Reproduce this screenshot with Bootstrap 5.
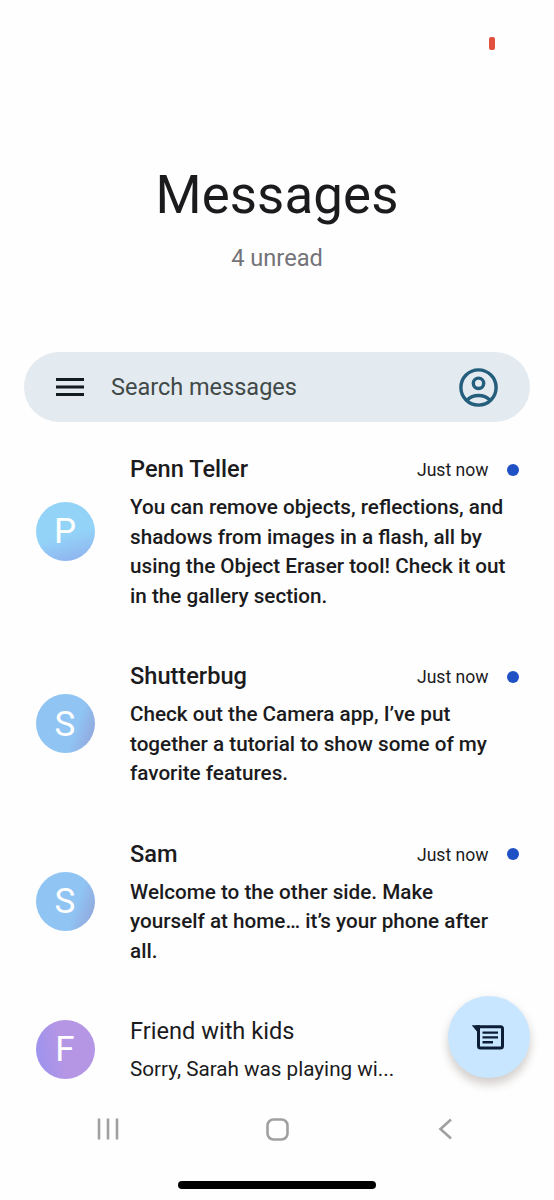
<!DOCTYPE html>
<html lang="en">
<head>
<meta charset="utf-8">
<meta name="viewport" content="width=device-width, initial-scale=1">
<title>Messages</title>
<link href="https://cdn.jsdelivr.net/npm/bootstrap@5.3.0/dist/css/bootstrap.min.css" rel="stylesheet">
<style>
body { font-family: Roboto, sans-serif; background: #fefefe; color: #1b1b1d; }
.phone { width: 554px; height: 1200px; }
.status { height: 84px; padding: 37px 59px 0 0; }
.rec { width: 6px; height: 13px; border-radius: 2px; background: #e2503f; }
.head { height: 268px; padding-top: 79px; }
.title { font-size: 52.8px; line-height: 64px; font-weight: 400; letter-spacing: .1px; }
.unread { font-size: 23.6px; line-height: 30px; margin-top: 16px; color: #737378; }
.search { height: 70px; margin: 0 24px; padding: 0 32px; background: #e3eaf0; color: #404947; font-size: 23.5px; }
.search-label { margin-left: 27px; padding-top: 1px; }
.threads { margin-top: 6px; }
.thread { padding: 26px 35px 24px; }
.avatar { width: 59px; height: 59px; font-size: 35px; color: #fff; margin: -1px 35.5px 1px .5px; padding-top: 2px; }
.av-p { background: linear-gradient(165deg, #93d3f8 55%, #8fb2ee 95%); }
.av-s { background: linear-gradient(110deg, #8fc4f3 65%, #92a8dc 92%); }
.av-f { background: linear-gradient(80deg, #9c93ee 5%, #b596e5 45%); }
.sender { font-size: 23.6px; line-height: 31px; font-weight: 500; }
.time { font-size: 17.6px; line-height: 31px; padding-top: 1px; margin-bottom: -1px; }
.dot { width: 12px; height: 12px; background: #1f50c4; margin: 0 .5px 0 18px; }
.text { font-size: 20.68px; line-height: 29.5px; font-weight: 500; margin-top: 8px; }
.read .sender, .read .text { font-weight: 400; }
.fab { left: 448px; top: 996px; width: 82px; height: 82px; background: #c8e6ff; box-shadow: 0 7px 10px rgba(70,50,40,.2), 0 1px 12px rgba(0,0,0,.05); }
.sysnav { left: 0; right: 0; top: 1099px; height: 60px; padding: 0 98px 0 97px; }
.handle { left: 178px; top: 1180.5px; width: 198px; height: 8px; background: #000; }
</style>
</head>
<body>
<div class="phone position-relative overflow-hidden">
  <div class="status d-flex justify-content-end"><span class="rec"></span></div>
  <header class="head text-center">
    <h1 class="title mb-0">Messages</h1>
    <p class="unread mb-0">4 unread</p>
  </header>
  <div class="search d-flex align-items-center rounded-pill">
    <svg width="28" height="20" viewBox="0 0 28 20"><path d="M0 2.500h28M0 10h28M0 17.500h28" stroke="#101c1e" stroke-width="3"/></svg>
    <span class="search-label">Search messages</span>
    <svg class="ms-auto" width="39" height="39" viewBox="0 0 39 39" fill="none" stroke="#245e7d" stroke-width="3.4"><circle cx="19.5" cy="19.5" r="17.6"/><circle cx="19.5" cy="15.3" r="5.2"/><path d="M8 32.2C14 26 25 26 31 32.2"/></svg>
  </div>
  <main class="threads">
    <article class="thread d-flex align-items-center">
      <div class="avatar av-p rounded-circle d-flex align-items-center justify-content-center flex-shrink-0">P</div>
      <div class="flex-grow-1">
        <div class="d-flex align-items-center"><span class="sender">Penn Teller</span><span class="time ms-auto">Just now</span><span class="dot rounded-circle"></span></div>
        <p class="text text-nowrap mb-0">You can remove objects, reflections, and<br>shadows from images in a flash, all by<br>using the Object Eraser tool! Check it out<br>in the gallery section.</p>
      </div>
    </article>
    <article class="thread d-flex align-items-center">
      <div class="avatar av-s rounded-circle d-flex align-items-center justify-content-center flex-shrink-0">S</div>
      <div class="flex-grow-1">
        <div class="d-flex align-items-center"><span class="sender">Shutterbug</span><span class="time ms-auto">Just now</span><span class="dot rounded-circle"></span></div>
        <p class="text text-nowrap mb-0">Check out the Camera app, I’ve put<br>together a tutorial to show some of my<br>favorite features.</p>
      </div>
    </article>
    <article class="thread d-flex align-items-center">
      <div class="avatar av-s rounded-circle d-flex align-items-center justify-content-center flex-shrink-0">S</div>
      <div class="flex-grow-1">
        <div class="d-flex align-items-center"><span class="sender">Sam</span><span class="time ms-auto">Just now</span><span class="dot rounded-circle"></span></div>
        <p class="text text-nowrap mb-0">Welcome to the other side. Make<br>yourself at home… it’s your phone after<br>all.</p>
      </div>
    </article>
    <article class="thread read d-flex align-items-center">
      <div class="avatar av-f rounded-circle d-flex align-items-center justify-content-center flex-shrink-0">F</div>
      <div class="flex-grow-1">
        <div class="d-flex align-items-center"><span class="sender">Friend with kids</span></div>
        <p class="text text-nowrap mb-0">Sorry, Sarah was playing wi...</p>
      </div>
    </article>
  </main>
  <div class="fab position-absolute rounded-circle">
    <svg class="d-block" width="82" height="82" viewBox="0 0 82 82" fill="none" stroke="#0c1e36" stroke-width="3"><path d="M28 30.800H52.500Q54.500 30.800 54.500 32.800V50Q54.500 52 52.500 52H32.500Q30.500 52 30.500 50V31"/><path d="M23.700 29.300H32V38H29V35.500Z" fill="#0c1e36" stroke="none"/><path d="M34.500 36.600H50M34.500 41.400H50M34.500 46.200H45" stroke-width="2.4"/></svg>
  </div>
  <nav class="sysnav position-absolute d-flex justify-content-between align-items-center">
    <svg width="22" height="22" viewBox="0 0 22 22"><path d="M2 .5v21M11 .5v21M20 .5v21" stroke="#a0a0a0" stroke-width="2.6"/></svg>
    <svg width="24" height="24" viewBox="0 0 24 24" fill="none"><rect x="1.500" y="2.500" width="20" height="20" rx="6" stroke="#a0a0a0" stroke-width="2.6"/></svg>
    <svg width="20" height="22" viewBox="0 0 20 22" fill="none"><path d="M15 1.500L4.500 11 15 20.500" stroke="#a0a0a0" stroke-width="2.6"/></svg>
  </nav>
  <div class="handle position-absolute rounded-pill"></div>
</div>
<script src="https://cdn.jsdelivr.net/npm/bootstrap@5.3.0/dist/js/bootstrap.bundle.min.js"></script>
</body>
</html>
